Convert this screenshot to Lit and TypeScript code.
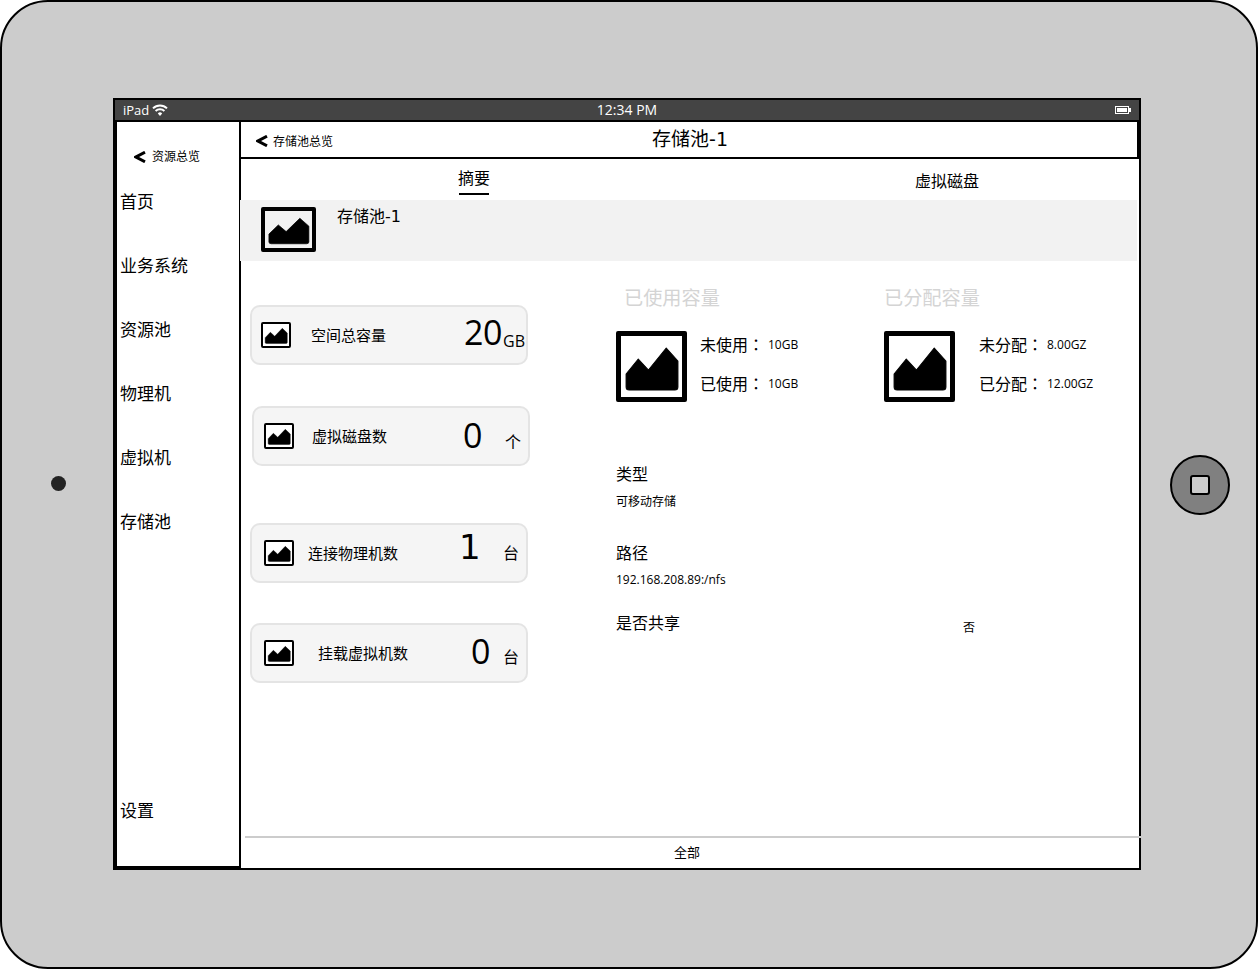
import { LitElement, html, css, svg } from "lit";
import { customElement } from "lit/decorators.js";

const NAV = ["首页", "业务系统", "资源池", "物理机", "虚拟机", "存储池"];

const CARDS = [
  { cls: "c1", label: "空间总容量", num: "20", unit: "GB" },
  { cls: "c2", label: "虚拟磁盘数", num: "0", unit: "个" },
  { cls: "c3", label: "连接物理机数", num: "1", unit: "台" },
  { cls: "c4", label: "挂载虚拟机数", num: "0", unit: "台" },
];

// placeholder picture: a frame (border comes from the size class) and a mountain
const pic = (size: string) => html`
  <div class="pic ${size}">
    <svg viewBox="0 0 60 61" preserveAspectRatio="none">
      <path
        d="M5 38 L17 23 L27 34 L44.5 12 L56 25 V51 Q56 54 53 54 H8 Q5 54 5 51 Z"
        fill="#000"
        stroke="#000"
        stroke-width="1"
        stroke-linejoin="round"
      />
    </svg>
  </div>
`;

const chevron = svg`<polyline points="11,1.2 2,6 11,10.8" fill="none" stroke="#000" stroke-width="3" />`;

@customElement("app-root")
export class AppRoot extends LitElement {
  static styles = css`
    :host {
      display: block;
      width: 1258px;
      height: 969px;
      font-family: "Open Sans", "Noto Sans CJK SC", sans-serif;
      color: #000;
      background: #fff;
    }
    * {
      box-sizing: border-box;
    }
    .device {
      width: 1258px;
      height: 969px;
      background: #ccc;
      border: 2px solid #000;
      border-radius: 48px;
      display: flex;
      align-items: flex-start;
    }
    .dot {
      width: 15px;
      height: 15px;
      margin: 474px 0 0 49px;
      border-radius: 50%;
      background: #222;
      flex: none;
    }
    .home {
      width: 60px;
      height: 60px;
      margin: 453px 0 0 29px;
      border-radius: 50%;
      background: #808080;
      border: 2px solid #000;
      display: flex;
      align-items: center;
      justify-content: center;
      flex: none;
    }
    .home div {
      width: 20px;
      height: 20px;
      border-radius: 3px;
      background: #ccc;
      border: 2px solid #000;
    }
    .screen {
      width: 1028px;
      height: 772px;
      margin: 96px 0 0 47px;
      border: 2px solid #000;
      background: #fff;
      display: flex;
      flex-direction: column;
      flex: none;
    }
    .status {
      height: 22px;
      background: #444;
      border-bottom: 2px solid #000;
      color: #fff;
      display: grid;
      grid-template-columns: 1fr auto 1fr;
      align-items: center;
      padding: 0 8px;
      font-size: 13px;
      line-height: 20px;
    }
    .status-left {
      display: flex;
      align-items: center;
      gap: 3px;
    }
    .status-time {
      font-size: 14px;
    }
    .status-right {
      display: flex;
      justify-content: flex-end;
    }
    .body {
      flex: 1;
      display: flex;
      min-height: 0;
    }
    .side {
      width: 126px;
      flex: none;
      background: #fff;
      border: 2px solid #000;
      border-width: 0 2px 2px 2px;
      display: flex;
      flex-direction: column;
      padding: 0 0 23px 3px;
      font-size: 17px;
    }
    .side-back {
      height: 48px;
      padding: 22px 0 0 14px;
      display: flex;
      align-items: center;
      gap: 6px;
      font-size: 12px;
      line-height: 24px;
    }
    .chev {
      width: 12px;
      height: 12px;
      flex: none;
    }
    .nav {
      height: 64px;
      line-height: 64px;
    }
    .nav.settings {
      margin-top: auto;
    }
    .main {
      flex: 1;
      min-width: 0;
      display: flex;
      flex-direction: column;
    }
    .head {
      height: 37px;
      border: 2px solid #000;
      border-width: 0 2px 2px 0;
      display: grid;
      grid-template-columns: 1fr auto 1fr;
      align-items: center;
      padding: 0 13px 0 15px;
    }
    .head-back {
      display: flex;
      align-items: center;
      gap: 5px;
      font-size: 12px;
      padding-top: 3px;
    }
    .head-title {
      font-size: 19px;
      line-height: 32px;
      margin-top: -2px;
    }
    .suffix {
      font-family: "DejaVu Sans", sans-serif;
    }
    .tabs {
      height: 41px;
      display: flex;
      gap: 425px;
      padding-left: 217px;
      font-size: 16px;
      line-height: 24px;
    }
    .tab {
      padding-top: 10px;
    }
    .tab.on {
      height: 36px;
      padding-top: 7px;
      position: relative;
    }
    .tab.on::after {
      content: "";
      position: absolute;
      left: 1px;
      right: 1px;
      bottom: 0;
      height: 2px;
      background: #000;
    }
    .strip {
      height: 61px;
      margin-left: -1px;
      margin-right: 2px;
      background: #f2f2f2;
      display: flex;
      align-items: flex-start;
      padding: 7px 0 0 21px;
      gap: 21px;
      font-size: 16px;
      line-height: 20px;
    }
    .strip > span {
      margin-top: -1px;
    }
    .pic {
      background: #fff;
      border: 2px solid #000;
      border-radius: 2px;
      flex: none;
    }
    .pic svg {
      display: block;
      width: 100%;
      height: 100%;
    }
    .pic.lg {
      width: 71px;
      height: 71px;
      border-width: 5px;
    }
    .pic.md {
      width: 55px;
      height: 45px;
      border-width: 4px;
      background: #f2f2f2;
    }
    .pic.sm {
      width: 30px;
      height: 26px;
    }
    .content {
      flex: 1;
      min-height: 0;
      display: grid;
      grid-template-columns: 375px 1fr;
    }
    .cards {
      padding: 44px 0 0 9px;
      display: flex;
      flex-direction: column;
    }
    .card {
      width: 278px;
      height: 60px;
      flex: none;
      border: 2px solid #e4e4e4;
      border-radius: 10px;
      background: #f5f5f5;
      display: grid;
      align-items: center;
    }
    .card.c1 {
      padding-left: 9px;
      grid-template-columns: 50px 153px 39px 1fr;
    }
    .card.c2 {
      margin: 41px 0 0 2px;
      padding-left: 10px;
      grid-template-columns: 48px 151px 42px 1fr;
    }
    .card.c3 {
      margin-top: 57px;
      padding-left: 12px;
      grid-template-columns: 44px 151px 44px 1fr;
    }
    .card.c4 {
      margin-top: 40px;
      padding-left: 12px;
      grid-template-columns: 54px 153px 32px 1fr;
    }
    .card-label {
      font-size: 15px;
      line-height: 20px;
    }
    .card-num {
      font-size: 34px;
      line-height: 40px;
      margin-top: -4px;
    }
    .card-unit {
      font-size: 16px;
      line-height: 20px;
      margin-top: 8px;
    }
    .card.c1 .card-num {
      letter-spacing: -0.5px;
      margin-top: -6px;
    }
    .card.c1 .card-unit {
      margin-top: 11px;
    }
    .card.c2 .card-num {
      margin-top: -2px;
    }
    .card.c2 .card-unit {
      margin-top: 11px;
    }
    .card.c3 .card-num {
      font-family: "DejaVu Sans", sans-serif;
      margin-top: -13px;
    }
    .card.c3 .card-unit {
      margin-top: 0;
    }
    .right {
      display: flex;
      flex-direction: column;
      padding-top: 25px;
    }
    .usage {
      display: grid;
      grid-template-columns: 268px 1fr;
    }
    .usage-title {
      font-size: 19.2px;
      line-height: 24px;
      color: #d4d4d4;
      padding-left: 8px;
      margin-bottom: 21px;
    }
    .usage-title.flush {
      padding-left: 0;
    }
    .usage-body {
      display: flex;
      align-items: flex-start;
      gap: 13px;
    }
    .usage-body.wide {
      gap: 24px;
    }
    .usage-rows {
      display: flex;
      flex-direction: column;
      gap: 15px;
      padding-top: 1px;
    }
    .usage-row {
      display: flex;
      align-items: center;
      height: 24px;
      font-size: 16px;
    }
    .usage-row b {
      font-weight: 400;
      width: 68px;
      flex: none;
    }
    .usage-row i {
      font-style: normal;
      font-family: "Noto Sans CJK TC", sans-serif;
    }
    .usage-row span {
      font-size: 12px;
    }
    .field {
      font-size: 16px;
      line-height: 24px;
    }
    .field.f1 {
      margin-top: 60px;
    }
    .field.f2 {
      margin-top: 31px;
    }
    .field.f3 {
      margin-top: 23px;
      display: grid;
      grid-template-columns: 347px 1fr;
    }
    .value {
      font-size: 12px;
      line-height: 16px;
      margin-top: 8px;
    }
    .field.f2 + .value {
      margin-top: 7px;
    }
    .field.f3 .value {
      margin-top: 9px;
    }
    .foot {
      height: 32px;
      margin: 0 -2px 0 4px;
      border-top: 2px solid #ccc;
      font-size: 13px;
      line-height: 28px;
      padding-left: 429px;
    }
  `;

  render() {
    return html`
      <div class="device">
        <div class="dot"></div>
        <div class="screen">
          <div class="status">
            <div class="status-left">
              <span>iPad</span>
              <svg width="16" height="12" viewBox="0 0 16 12">
                <path d="M1 4.4 A10 10 0 0 1 15 4.4" fill="none" stroke="#fff" stroke-width="2" />
                <path d="M3.6 7 A6.4 6.4 0 0 1 12.4 7" fill="none" stroke="#fff" stroke-width="2" />
                <path d="M5.8 9.4 L8 12 L10.2 9.4 A3.2 3.2 0 0 0 5.8 9.4 Z" fill="#fff" />
              </svg>
            </div>
            <div class="status-time">12:34 PM</div>
            <div class="status-right">
              <svg width="16" height="8" viewBox="0 0 16 8">
                <rect x="0.5" y="0.5" width="13" height="7" fill="none" stroke="#fff" />
                <rect x="2" y="2" width="10" height="4" fill="#fff" />
                <rect x="14" y="2" width="2" height="4" fill="#fff" />
              </svg>
            </div>
          </div>
          <div class="body">
            <div class="side">
              <div class="side-back">
                <svg class="chev" viewBox="0 0 12 12">${chevron}</svg>
                <span>资源总览</span>
              </div>
              ${NAV.map((n) => html`<div class="nav">${n}</div>`)}
              <div class="nav settings">设置</div>
            </div>
            <div class="main">
              <div class="head">
                <div class="head-back">
                  <svg class="chev" viewBox="0 0 12 12">${chevron}</svg>
                  <span>存储池总览</span>
                </div>
                <div class="head-title">存储池<span class="suffix">-1</span></div>
              </div>
              <div class="tabs">
                <div class="tab on">摘要</div>
                <div class="tab">虚拟磁盘</div>
              </div>
              <div class="strip">
                ${pic("md")}
                <span>存储池<span class="suffix">-1</span></span>
              </div>
              <div class="content">
                <div class="cards">
                  ${CARDS.map(
                    (c) => html`
                      <div class="card ${c.cls}">
                        ${pic("sm")}
                        <div class="card-label">${c.label}</div>
                        <div class="card-num">${c.num}</div>
                        <div class="card-unit">${c.unit}</div>
                      </div>
                    `
                  )}
                </div>
                <div class="right">
                  <div class="usage">
                    <div>
                      <div class="usage-title">已使用容量</div>
                      <div class="usage-body">
                        ${pic("lg")}
                        <div class="usage-rows">
                          <div class="usage-row"><b>未使用<i>：</i></b><span>10GB</span></div>
                          <div class="usage-row"><b>已使用<i>：</i></b><span>10GB</span></div>
                        </div>
                      </div>
                    </div>
                    <div>
                      <div class="usage-title flush">已分配容量</div>
                      <div class="usage-body wide">
                        ${pic("lg")}
                        <div class="usage-rows">
                          <div class="usage-row"><b>未分配<i>：</i></b><span>8.00GZ</span></div>
                          <div class="usage-row"><b>已分配<i>：</i></b><span>12.00GZ</span></div>
                        </div>
                      </div>
                    </div>
                  </div>
                  <div class="field f1">类型</div>
                  <div class="value">可移动存储</div>
                  <div class="field f2">路径</div>
                  <div class="value">192.168.208.89:/nfs</div>
                  <div class="field f3">
                    <span>是否共享</span>
                    <div class="value">否</div>
                  </div>
                </div>
              </div>
              <div class="foot">全部</div>
            </div>
          </div>
        </div>
        <div class="home"><div></div></div>
      </div>
    `;
  }
}
